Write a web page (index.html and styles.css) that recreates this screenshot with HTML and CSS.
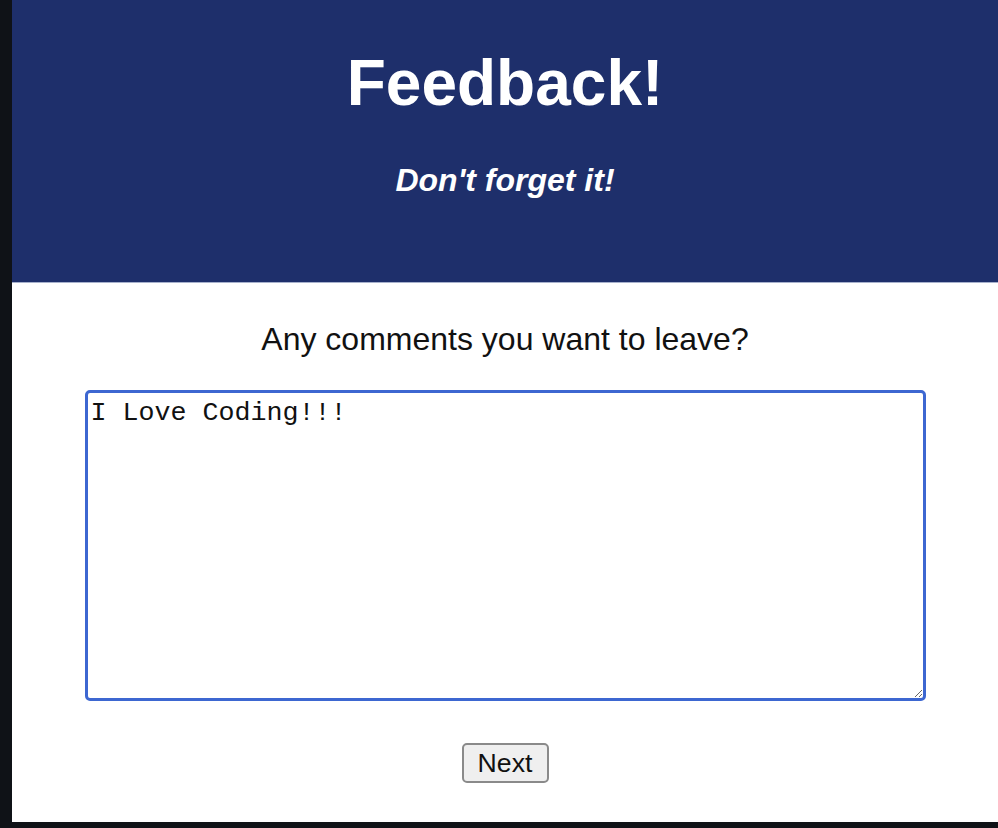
FILE: index.html
```html
<!DOCTYPE html>
<html lang="en">
<head>
<meta charset="utf-8">
<title>Feedback!</title>
<link rel="stylesheet" href="styles.css">
</head>
<body>
<div class="page">
  <header class="hero">
    <h1 class="hero-title">Feedback!</h1>
    <p class="hero-tag">Don't forget it!</p>
  </header>
  <main class="form">
    <label class="form-label" for="comments">Any comments you want to leave?</label>
    <textarea class="form-text" id="comments">I Love Coding!!!</textarea>
    <button class="form-btn" type="button">Next</button>
  </main>
</div>
</body>
</html>
```
FILE: styles.css
```css
html, body {
  margin: 0;
  padding: 0;
  background: #0f1217;
}

.page {
  margin-left: 12px;
  height: 822px;
  background: #ffffff;
  font-family: "Liberation Sans", Arial, sans-serif;
  color: #111111;
}

.hero {
  box-sizing: border-box;
  height: 283px;
  padding-top: 47px;
  background: #1e2f6b;
  border-bottom: 1px solid #a7b1cc;
  text-align: center;
  color: #ffffff;
}

.hero-title {
  margin: 0;
  font-size: 64px;
  line-height: 73px;
  font-weight: bold;
}

.hero-tag {
  margin: 42px 0 0;
  font-size: 32px;
  line-height: 37px;
  font-weight: bold;
  font-style: italic;
}

.form {
  display: flex;
  flex-direction: column;
  align-items: center;
  padding-top: 38px;
}

.form-label {
  font-size: 32px;
  line-height: 37px;
  color: #111111;
}

.form-text {
  box-sizing: border-box;
  margin-top: 32px;
  width: 841px;
  height: 311px;
  padding: 5px 3px;
  border: 3px solid #3d67d1;
  border-radius: 5px;
  outline: none;
  font-family: "Liberation Mono", "Courier New", monospace;
  font-size: 26.67px;
  line-height: 1.15;
  color: #111111;
  background: #ffffff;
}

.form-btn {
  box-sizing: border-box;
  margin-top: 42px;
  width: 87px;
  height: 40px;
  padding: 0 12px;
  border: 2px solid #8a8a8a;
  border-radius: 5px;
  background: #efefef;
  font-family: "Liberation Sans", Arial, sans-serif;
  font-size: 26.67px;
  color: #111111;
}
```
